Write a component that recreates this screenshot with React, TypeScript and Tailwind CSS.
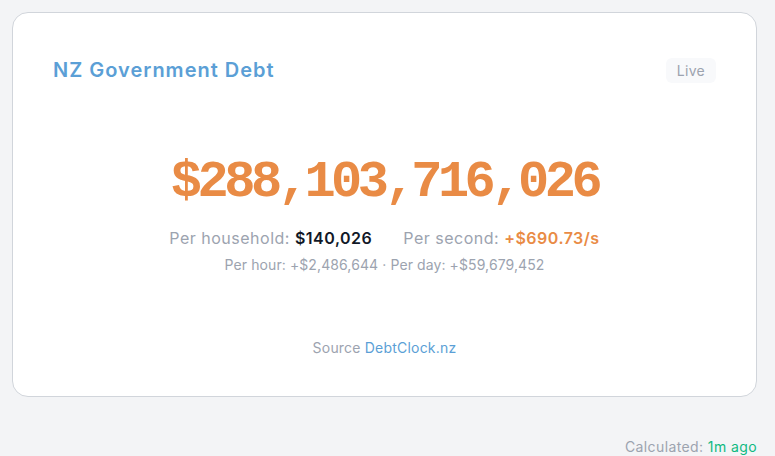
export default function App() {
  return (
    <div className="min-h-screen bg-[#f3f4f6] pt-[12px] pl-[12px] font-['Inter','Noto_Sans',sans-serif]">
      <div className="w-[745px] h-[385px] bg-white border border-[#d1d5db] rounded-[16px] flex flex-col px-10">
        <div className="flex items-center justify-between mt-[43px]">
          <h1 className="text-[20px] leading-[28px] font-semibold tracking-[1px] text-[#5b9fd6]">NZ Government Debt</h1>
          <span className="bg-[#f8f9fb] text-[#9ca3af] text-[14px] leading-[19px] tracking-[0.3px] px-[11px] py-[3px] rounded-[6px]">Live</span>
        </div>

        <div className="mt-[69px] text-center font-['Liberation_Mono',monospace] font-bold text-[52px] leading-[60px] tracking-[-4.5px] text-[#e98b45]">
          $288,103,716,026
        </div>

        <div className="mt-[13px] flex justify-center gap-[31px] text-[16px] leading-[24px] tracking-[0.5px]">
          <span className="text-[#9ca3af]">
            Per household: <span className="font-semibold text-[#111827]">$140,026</span>
          </span>
          <span className="text-[#9ca3af]">
            Per second: <span className="font-semibold text-[#e98b45]">+$690.73/s</span>
          </span>
        </div>

        <div className="mt-[5px] text-center text-[14px] leading-[20px] tracking-[0.1px] text-[#9ca3af]">
          Per hour: +$2,486,644 · Per day: +$59,679,452
        </div>

        <div className="mt-[63px] text-center text-[14px] leading-[20px] tracking-[0.2px] text-[#9ca3af]">
          Source <a className="text-[#5b9fd6]">DebtClock.nz</a>
        </div>
      </div>

      <div className="w-[745px] flex justify-end mt-[40px] text-[14px] leading-[20px] tracking-[0.4px]">
        <span className="text-[#9ca3af]">
          Calculated: <span className="text-[#10b981]">1m ago</span>
        </span>
      </div>
    </div>
  );
}
